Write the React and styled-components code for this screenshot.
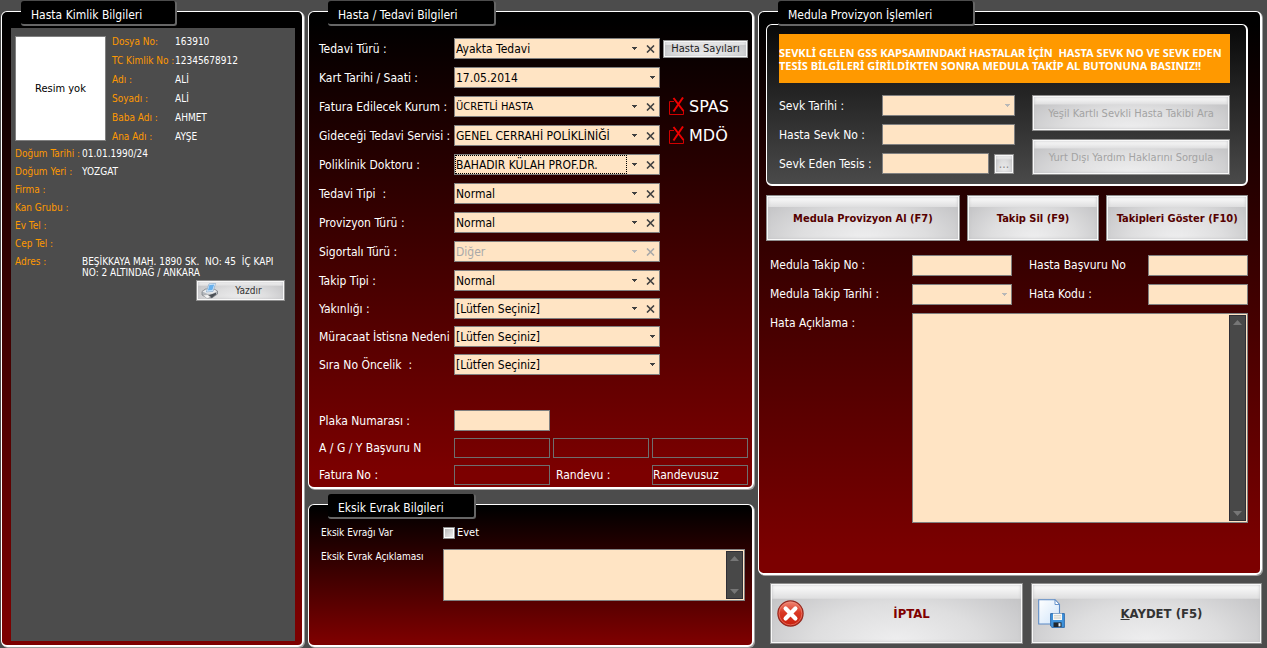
import React, { useState } from "react";
import styled, { createGlobalStyle, css } from "styled-components";

const tedaviFields = [
  { id: "tedaviTuru", label: "Tedavi Türü :", value: "Ayakta Tedavi", clear: true, extra: "sayi" },
  { id: "kartTarihi", label: "Kart Tarihi / Saati :", value: "17.05.2014" },
  { id: "kurum", label: "Fatura Edilecek Kurum :", value: "ÜCRETLİ HASTA", clear: true, small: true, extra: "SPAS" },
  { id: "servis", label: "Gideceği Tedavi Servisi :", value: "GENEL CERRAHİ POLİKLİNİĞİ", clear: true, extra: "MDÖ" },
  { id: "doktor", label: "Poliklinik Doktoru :", value: "BAHADIR KÜLAH PROF.DR.", clear: true, focused: true },
  { id: "tedaviTipi", label: "Tedavi Tipi  :", value: "Normal", clear: true },
  { id: "provizyonTuru", label: "Provizyon Türü :", value: "Normal", clear: true },
  { id: "sigortaliTuru", label: "Sigortalı Türü :", value: "Diğer", clear: true, disabled: true },
  { id: "takipTipi", label: "Takip Tipi :", value: "Normal", clear: true }
];

const secimFields = [
  { id: "yakinligi", label: "Yakınlığı :", value: "[Lütfen Seçiniz]", clear: true },
  { id: "istisna", label: "Müracaat İstisna Nedeni", value: "[Lütfen Seçiniz]" },
  { id: "oncelik", label: "Sıra No Öncelik  :", value: "[Lütfen Seçiniz]" }
];

const kimlikTop = [
  ["Dosya No:", "163910"],
  ["TC Kimlik No :", "12345678912"],
  ["Adı :", "ALİ"],
  ["Soyadı :", "ALİ"],
  ["Baba Adı :", "AHMET"],
  ["Ana Adı :", "AYŞE"]
];

const kimlikBottom = [
  ["Doğum Tarihi :", "01.01.1990/24"],
  ["Doğum Yeri :", "YOZGAT"],
  ["Firma :", ""],
  ["Kan Grubu :", ""],
  ["Ev Tel :", ""],
  ["Cep Tel :", ""],
  ["Adres :", "BEŞİKKAYA MAH. 1890 SK.  NO: 45  İÇ KAPI\nNO: 2 ALTINDAĞ / ANKARA"]
];

const Arrow = () => (
  <ArrowIcon viewBox="0 0 5 3" aria-hidden="true">
    <path d="M0 0h5v1H4v1H3v1H2V2H1V1H0z" fill="currentColor" />
  </ArrowIcon>
);

const Combo = ({ id, value, clear, small, disabled, focused, muted }) => {
  const [current, setCurrent] = useState(value);

  return (
    <ComboBox disabled={disabled}>
      <Select
        id={id}
        value={current}
        disabled={disabled}
        $small={small}
        $focused={focused}
        onChange={e => setCurrent(e.target.value)}
      >
        <option value={value}>{value}</option>
        {value && <option value="" />}
      </Select>
      <ArrowSlot $muted={muted || disabled}>
        <Arrow />
      </ArrowSlot>
      {clear && (
        <ClearButton
          type="button"
          aria-label="Temizle"
          disabled={disabled}
          onClick={() => setCurrent("")}
        >
          <svg width="9" height="8" viewBox="0 0 9 8">
            <path d="M1 0.5L8 7.5M8 0.5L1 7.5" stroke="currentColor" strokeWidth="1.6" />
          </svg>
        </ClearButton>
      )}
    </ComboBox>
  );
};

const CrossCheck = ({ children }) => {
  const [on, setOn] = useState(true);

  return (
    <CrossLabel>
      <CrossInput type="checkbox" checked={on} onChange={() => setOn(!on)} />
      <svg width="16" height="19" viewBox="0 0 16 19" aria-hidden="true">
        <path d="M5 4.5H0.5V17.5H14.5V13" fill="none" stroke="#d00000" />
        {on && (
          <path d="M4.5 1L14.5 14M14 0.5L4.5 14.5" stroke="#ee0000" strokeWidth="2" fill="none" />
        )}
      </svg>
      {children}
    </CrossLabel>
  );
};

const Field = ({ field }) => (
  <Row>
    <Label htmlFor={field.id}>{field.label}</Label>
    <Combo {...field} />
    {field.extra === "sayi" && <SmallButton type="button">Hasta Sayıları</SmallButton>}
    {field.extra && field.extra !== "sayi" && <CrossCheck>{field.extra}</CrossCheck>}
  </Row>
);

const ScrolledText = ({ id, height }) => (
  <AreaBox $height={height}>
    <Area id={id} />
    <ScrollTrack aria-hidden="true">
      <svg width="9" height="5" viewBox="0 0 9 5">
        <path d="M4.5 0L9 5H0z" fill="#767676" />
      </svg>
      <svg width="9" height="5" viewBox="0 0 9 5">
        <path d="M0 0H9L4.5 5z" fill="#767676" />
      </svg>
    </ScrollTrack>
  </AreaBox>
);

const PrinterIcon = () => (
  <svg width="18" height="16" viewBox="0 0 18 16" aria-hidden="true">
    <path d="M1 8.5L4.5 6H13L16.5 8V11L11 14.8H6L1 12z" fill="#b4b8bd" stroke="#74787e" strokeWidth="0.7" />
    <path d="M1.4 8.6L6.5 10.8H11.5L16 8.2L13 6.4H5z" fill="#e9ebed" />
    <path d="M5.4 9L8 0.9L14.6 0.4L12 8.4z" fill="#eaf5ff" stroke="#86a9cc" strokeWidth="0.7" />
    <path d="M8.4 2L13.2 1.6L11.4 7.2L6.8 7.6z" fill="#69b1ec" />
    <path d="M7 12.4L15 9.8V11.6L11 14.8H7z" fill="#4b5056" />
    <path d="M2 12.2L6.5 11.6L10 14.2L6 15.5z" fill="#f4f4f4" stroke="#8a8d91" strokeWidth="0.4" />
  </svg>
);

const CancelIcon = () => (
  <svg width="27" height="27" viewBox="0 0 27 27" aria-hidden="true">
    <defs>
      <linearGradient id="red" x1="0" y1="0" x2="0" y2="1">
        <stop offset="0" stopColor="#f08a78" />
        <stop offset="0.45" stopColor="#da3a26" />
        <stop offset="1" stopColor="#c81e0c" />
      </linearGradient>
    </defs>
    <circle cx="13.5" cy="13.5" r="12.6" fill="url(#red)" stroke="#94281f" strokeWidth="1.2" />
    <circle cx="13.5" cy="13.5" r="11.4" fill="none" stroke="#f0917f" strokeWidth="0.6" />
    <path d="M8.6 8.6L18.4 18.4M18.4 8.6L8.6 18.4" stroke="#fff" strokeWidth="4.2" strokeLinecap="round" />
  </svg>
);

const SaveIcon = () => (
  <svg width="27" height="29" viewBox="0 0 27 29" aria-hidden="true">
    <defs>
      <linearGradient id="page" x1="0" y1="0" x2="1" y2="1">
        <stop offset="0" stopColor="#ffffff" />
        <stop offset="1" stopColor="#cfe4f9" />
      </linearGradient>
    </defs>
    <path d="M0.7 0.7H17L21.5 5.5V25H0.7z" fill="url(#page)" stroke="#5b8ac6" strokeWidth="1.1" />
    <path d="M17 0.7V5.5H21.5z" fill="#fff" stroke="#5b8ac6" strokeWidth="0.9" />
    <path d="M12.6 14.6H26.4V28.4H14L12.6 27z" fill="#3f93dc" stroke="#2b66a8" strokeWidth="0.9" />
    <path d="M15 14.6H24V21H15z" fill="#f8f8f5" />
    <path d="M16 16.8H23M16 19H23" stroke="#b9bdb4" strokeWidth="0.8" />
    <path d="M15.5 23.4H23.5V28H15.5z" fill="#20272e" />
    <path d="M20.5 24.2H22.5V27.4H20.5z" fill="#e9f2fa" />
  </svg>
);

const App = () => (
  <Page>
    <GlobalStyle />

    <Column>
      <Panel title="Hasta Kimlik Bilgileri" tabWidth={156}>
        <IdentityBox>
          <IdentityHead>
            <Photo>Resim yok</Photo>
            <HeadList>
              {kimlikTop.map(([name, value]) => (
                <HeadItem key={name}>
                  <dt>{name}</dt>
                  <dd>{value}</dd>
                </HeadItem>
              ))}
            </HeadList>
          </IdentityHead>
          <InfoList>
            {kimlikBottom.map(([name, value]) => (
              <InfoItem key={name}>
                <dt>{name}</dt>
                <dd>{value}</dd>
              </InfoItem>
            ))}
          </InfoList>
          <PrintButton type="button">
            <PrinterIcon />
            <span>Yazdır</span>
          </PrintButton>
        </IdentityBox>
      </Panel>
    </Column>

    <Column>
      <Panel title="Hasta / Tedavi Bilgileri" tabWidth={168} fixed>
        <TreatmentForm>
          <Rows $gap={8}>
            {tedaviFields.map(field => (
              <Field key={field.id} field={field} />
            ))}
          </Rows>
          <Rows $gap={7}>
            {secimFields.map(field => (
              <Field key={field.id} field={field} />
            ))}
          </Rows>
          <ExtraRows $gap={7}>
            <Row>
              <Label htmlFor="plaka">Plaka Numarası :</Label>
              <TextInput id="plaka" $width={96} />
            </Row>
            <Row>
              <Label htmlFor="basvuru1">A / G / Y Başvuru N</Label>
              <Triple>
                <OutlineInput id="basvuru1" />
                <OutlineInput aria-label="Başvuru 2" />
                <OutlineInput aria-label="Başvuru 3" />
              </Triple>
            </Row>
            <Row>
              <Label htmlFor="faturaNo">Fatura No :</Label>
              <Triple>
                <OutlineInput id="faturaNo" />
                <PlainLabel htmlFor="randevu">Randevu :</PlainLabel>
                <OutlineInput id="randevu" defaultValue="Randevusuz" />
              </Triple>
            </Row>
          </ExtraRows>
        </TreatmentForm>
      </Panel>

      <Panel title="Eksik Evrak Bilgileri" tabWidth={148}>
        <MissingForm>
          <MissingLabel as="span">Eksik Evrağı Var</MissingLabel>
          <CheckLabel>
            <CheckInput type="checkbox" />
            Evet
          </CheckLabel>
          <MissingLabel htmlFor="eksik">Eksik Evrak Açıklaması</MissingLabel>
          <ScrolledText id="eksik" height={52} />
        </MissingForm>
      </Panel>
    </Column>

    <Column>
      <Panel title="Medula Provizyon İşlemleri" tabWidth={197}>
        <MedulaBody>
          <ReferralBox>
            <Banner>
              <span>
                {"SEVKLİ GELEN GSS KAPSAMINDAKİ HASTALAR İÇİN  HASTA SEVK NO VE SEVK EDEN\n"}
                {"TESİS BİLGİLERİ GİRİLDİKTEN SONRA MEDULA TAKİP AL BUTONUNA BASINIZ!!"}
              </span>
            </Banner>
            <ReferralGrid>
              <Rows $gap={8}>
                <Row>
                  <ReferralLabel htmlFor="sevkTarihi">Sevk Tarihi :</ReferralLabel>
                  <ComboSlot $width={133}>
                    <Combo id="sevkTarihi" value="" muted />
                  </ComboSlot>
                </Row>
                <Row>
                  <ReferralLabel htmlFor="sevkNo">Hasta Sevk No :</ReferralLabel>
                  <TextInput id="sevkNo" $width={133} />
                </Row>
                <Row>
                  <ReferralLabel htmlFor="tesis">Sevk Eden Tesis :</ReferralLabel>
                  <TextInput id="tesis" $width={107} />
                  <DotsButton type="button">...</DotsButton>
                </Row>
              </Rows>
              <QueryButtons>
                <QueryButton type="button" disabled>
                  Yeşil Kartlı Sevkli Hasta Takibi Ara
                </QueryButton>
                <QueryButton type="button" disabled>
                  Yurt Dışı Yardım Haklarını Sorgula
                </QueryButton>
              </QueryButtons>
            </ReferralGrid>
          </ReferralBox>

          <MedulaButtons>
            <MedulaButton type="button">Medula Provizyon Al (F7)</MedulaButton>
            <MedulaButton type="button">Takip Sil (F9)</MedulaButton>
            <MedulaButton type="button">Takipleri Göster (F10)</MedulaButton>
          </MedulaButtons>

          <FollowGrid>
            <FollowLabel htmlFor="takipNo">Medula Takip No :</FollowLabel>
            <TextInput id="takipNo" />
            <FollowLabel htmlFor="basvuruNo" $inset>
              Hasta Başvuru No
            </FollowLabel>
            <TextInput id="basvuruNo" />
            <FollowLabel htmlFor="takipTarihi">Medula Takip Tarihi :</FollowLabel>
            <Combo id="takipTarihi" value="" muted />
            <FollowLabel htmlFor="hataKodu" $inset>
              Hata Kodu :
            </FollowLabel>
            <TextInput id="hataKodu" />
            <FollowLabel htmlFor="hata">Hata Açıklama :</FollowLabel>
            <WideCell>
              <ScrolledText id="hata" height={210} />
            </WideCell>
          </FollowGrid>
        </MedulaBody>
      </Panel>

      <Actions>
        <ActionButton type="button" $color="#800000">
          <CancelIcon />
          <span>İPTAL</span>
        </ActionButton>
        <ActionButton type="button" $color="#333333">
          <SaveIcon />
          <span>
            <u>K</u>AYDET (F5)
          </span>
        </ActionButton>
      </Actions>
    </Column>
  </Page>
);

const Panel = ({ title, tabWidth, fixed, children }) => (
  <PanelWrapper $fixed={fixed}>
    <Tab $width={tabWidth}>{title}</Tab>
    <PanelFrame>{children}</PanelFrame>
  </PanelWrapper>
);

const GlobalStyle = createGlobalStyle`
  * {
    box-sizing: border-box;
  }

  body {
    margin: 0;
    background: #4c4c4c;
    color: #fff;
    font-family: "DejaVu Sans Condensed", "DejaVu Sans", sans-serif;
    font-size: 12px;
  }

  button, input, select, textarea {
    margin: 0;
    font: inherit;
    border-radius: 0;
  }

  dl, dt, dd {
    margin: 0;
  }
`;

const glossy = css`
  border: 1px solid #8e8e8e;
  box-shadow: inset 0 0 0 1px #f8f8f8, inset 0 0 3px 1px #c0c0c4;
  background: linear-gradient(#ffffff, #dededf) 0 0 / 100% 25% no-repeat,
    radial-gradient(ellipse 60% 120% at 50% 100%, #efeff0 0%, #dededf 55%, #c6c6c8 100%);
  cursor: pointer;
  padding: 0;
`;

const Page = styled.main`
  display: grid;
  grid-template-columns: 303fr 446fr 504fr;
  gap: 4px;
  min-height: 100vh;
  padding: 1px 5px 0 1px;
`;

const Column = styled.div`
  display: flex;
  flex-direction: column;
  gap: 4px;
  min-width: 0;
`;

const PanelWrapper = styled.section`
  position: relative;
  display: flex;
  flex: ${props => (props.$fixed ? "none" : "1")};
  padding: 10px 0 1px;
`;

const PanelFrame = styled.div`
  flex: 1;
  display: flex;
  min-width: 0;
  border: 1px solid #fff;
  border-right-width: 2px;
  border-bottom-width: 2px;
  border-radius: 6px;
  box-shadow: 1px 1px 0 #a0a0a0;
  background: linear-gradient(#000 2%, #7c0000 97%);
`;

const Tab = styled.h2`
  position: absolute;
  top: 0;
  left: 20px;
  width: ${props => props.$width}px;
  height: 25px;
  margin: 0;
  padding: 0 10px;
  border: solid #666;
  border-width: 0 2px 2px 0;
  border-radius: 3px;
  background: #000;
  font-size: 12px;
  font-weight: 400;
  line-height: 28px;
  white-space: nowrap;
`;

const IdentityBox = styled.div`
  flex: 1;
  margin: 16px 7px 4px 9px;
  padding: 8px 8px 8px 4px;
  background: #4c4c4c;
  font-size: 10px;

  dt {
    color: #ff9900;
    white-space: nowrap;
  }

  dd {
    white-space: pre;
  }
`;

const IdentityHead = styled.div`
  display: flex;
  gap: 6px;
`;

const Photo = styled.div`
  display: flex;
  align-items: center;
  justify-content: center;
  width: 91px;
  height: 105px;
  border: 1px solid #808080;
  background: #fff;
  color: #000;
  font-size: 11px;
`;

const HeadList = styled.dl`
  margin-top: -4px;
`;

const HeadItem = styled.div`
  display: grid;
  grid-template-columns: 63px 1fr;
  line-height: 19px;
`;

const InfoList = styled.dl`
  margin-top: 2px;
`;

const InfoItem = styled.div`
  display: grid;
  grid-template-columns: 67px 1fr;
  min-height: 18px;
  line-height: 11px;
`;

const PrintButton = styled.button`
  ${glossy}
  display: flex;
  align-items: center;
  width: 89px;
  height: 21px;
  margin: 2px 2px 0 auto;
  padding: 0 4px;
  color: #333;

  span {
    flex: 1;
    padding-right: 2px;
  }
`;

const TreatmentForm = styled.form`
  flex: 1;
  padding: 26px 4px 2px 10px;
`;

const Rows = styled.div`
  display: flex;
  flex-direction: column;
  gap: ${props => props.$gap}px;

  & + & {
    margin-top: 7px;
  }
`;

const ExtraRows = styled.div`
  display: flex;
  flex-direction: column;
  gap: ${props => props.$gap}px;
  margin-top: 35px;
`;

const Row = styled.div`
  display: flex;
  align-items: center;
`;

const Label = styled.label`
  flex: none;
  width: 135px;
  line-height: 20px;
  white-space: pre;
`;

const PlainLabel = styled.label`
  padding-left: 3px;
`;

const ComboBox = styled.div`
  display: flex;
  width: 206px;
  height: 21px;
  border: 1px solid #808080;
  background: #ffe4c4;
  color: ${props => (props.disabled ? "#a9a9a9" : "#000")};
`;

const ComboSlot = styled.div`
  width: ${props => props.$width}px;

  ${ComboBox} {
    width: 100%;
  }
`;

const Select = styled.select`
  flex: 1;
  min-width: 0;
  padding: 1px 1px 0;
  border: 0;
  background: transparent;
  appearance: none;
  color: inherit;
  opacity: 1;
  font-size: ${props => (props.$small ? 11 : 12)}px;
  line-height: 18px;
  outline: ${props => (props.$focused ? "1px dotted #000" : "0")};
  outline-offset: -1px;
`;

const ArrowSlot = styled.span`
  display: flex;
  align-items: center;
  justify-content: center;
  width: 14px;
  color: ${props => (props.$muted ? "#b8b8b8" : "#404040")};
  pointer-events: none;
`;

const ArrowIcon = styled.svg`
  width: 5px;
  height: 3px;
`;

const ClearButton = styled.button`
  display: flex;
  align-items: center;
  justify-content: center;
  width: 18px;
  padding: 0;
  border: 0;
  background: transparent;
  color: ${props => (props.disabled ? "#a9a9a9" : "#404040")};
`;

const SmallButton = styled.button`
  ${glossy}
  width: 85px;
  height: 18px;
  margin-left: 3px;
  color: #222;
  font-size: 11px;
  line-height: 14px;
  white-space: nowrap;
`;

const CrossLabel = styled.label`
  position: relative;
  display: flex;
  align-items: center;
  gap: 4px;
  height: 21px;
  margin-left: 9px;
  font-family: "DejaVu Sans", sans-serif;
  font-size: 16px;
`;

const CrossInput = styled.input`
  position: absolute;
  width: 16px;
  height: 19px;
  opacity: 0;
`;

const TextInput = styled.input`
  width: ${props => (props.$width ? `${props.$width}px` : "100%")};
  height: 21px;
  padding: 0 2px;
  border: 1px solid #808080;
  background: #ffe4c4;
  color: #000;
`;

const Triple = styled.div`
  flex: 1;
  display: grid;
  grid-template-columns: repeat(3, 1fr);
  align-items: center;
  gap: 3px;
`;

const OutlineInput = styled.input`
  width: 100%;
  height: 20px;
  padding: 0;
  border: 1px solid #6e6e6e;
  background: transparent;
  color: #fff;
`;

const MissingForm = styled.form`
  flex: 1;
  display: grid;
  grid-template-columns: 122px 1fr;
  align-content: start;
  row-gap: 8px;
  padding: 20px 7px 0 12px;
  font-size: 11px;
`;

const MissingLabel = styled.label`
  font-size: 10px;
  line-height: 16px;
  white-space: nowrap;
`;

const CheckLabel = styled.label`
  display: flex;
  align-items: center;
  gap: 2px;
  line-height: 16px;
`;

const CheckInput = styled.input`
  width: 12px;
  height: 12px;
  appearance: none;
  border: 1px solid #8a8a8a;
  box-shadow: inset 0 0 0 1px #fff;
  background: linear-gradient(135deg, #b5b5b5, #f5f5f5);

  &:checked {
    background: #404040;
  }
`;

const AreaBox = styled.div`
  display: flex;
  height: ${props => props.$height}px;
  padding: 1px;
  border: 1px solid #808080;
  background: #ffe4c4;
`;

const Area = styled.textarea`
  flex: 1;
  min-width: 0;
  padding: 2px;
  border: 0;
  background: transparent;
  resize: none;
  outline: 0;
`;

const ScrollTrack = styled.div`
  display: flex;
  flex-direction: column;
  align-items: center;
  justify-content: space-between;
  width: 17px;
  padding: 4px 0;
  border: 1px solid #2e2e36;
  background: #484848;
`;

const MedulaBody = styled.form`
  flex: 1;
  min-width: 0;
  padding: 12px 12px 0 7px;
`;

const ReferralBox = styled.div`
  padding: 9px 16px 9px 12px;
  border: 1px solid #fff;
  border-right-width: 2px;
  border-bottom-width: 2px;
  border-radius: 6px;
  background: linear-gradient(#080808, #4a4a4a);
`;

const Banner = styled.p`
  display: flex;
  align-items: center;
  height: 49px;
  margin: 0 0 12px;
  background: #ff9900;
  font-family: "Noto Sans", sans-serif;
  font-size: 11px;
  font-weight: 700;
  line-height: 13px;
  white-space: pre;
`;

const ReferralGrid = styled.div`
  display: flex;
  justify-content: space-between;
  gap: 17px;
`;

const ReferralLabel = styled(Label)`
  width: 103px;
`;

const DotsButton = styled.button`
  ${glossy}
  width: 20px;
  height: 20px;
  margin-left: 5px;
  color: #888;
`;

const QueryButtons = styled.div`
  flex: 1;
  display: flex;
  flex-direction: column;
  gap: 8px;
`;

const QueryButton = styled.button`
  ${glossy}
  height: 36px;
  color: #a3a3a3;
  font-size: 11px;
  white-space: nowrap;
`;

const MedulaButtons = styled.div`
  display: grid;
  grid-template-columns: 193fr 132fr 141fr;
  gap: 7px;
  margin-top: 9px;
`;

const MedulaButton = styled.button`
  ${glossy}
  height: 46px;
  color: #550000;
  font-size: 11px;
  font-weight: 700;
  white-space: nowrap;
`;

const FollowGrid = styled.div`
  display: grid;
  grid-template-columns: 142px 1fr 136px 1fr;
  row-gap: 8px;
  margin-top: 14px;
  padding-left: 4px;

  ${ComboBox} {
    width: 100%;
  }
`;

const FollowLabel = styled.label`
  padding-left: ${props => (props.$inset ? 17 : 0)}px;
  line-height: 20px;
  white-space: nowrap;
`;

const WideCell = styled.div`
  grid-column: 2 / -1;
`;

const Actions = styled.div`
  display: grid;
  grid-template-columns: 253fr 231fr;
  gap: 8px;
  padding: 3px 0 4px 12px;
`;

const ActionButton = styled.button`
  ${glossy}
  display: flex;
  align-items: center;
  height: 61px;
  padding: 0 3px 0 6px;
  color: ${props => props.$color};
  font-size: 13px;
  font-weight: 700;

  span {
    flex: 1;
  }
`;

export default App;
